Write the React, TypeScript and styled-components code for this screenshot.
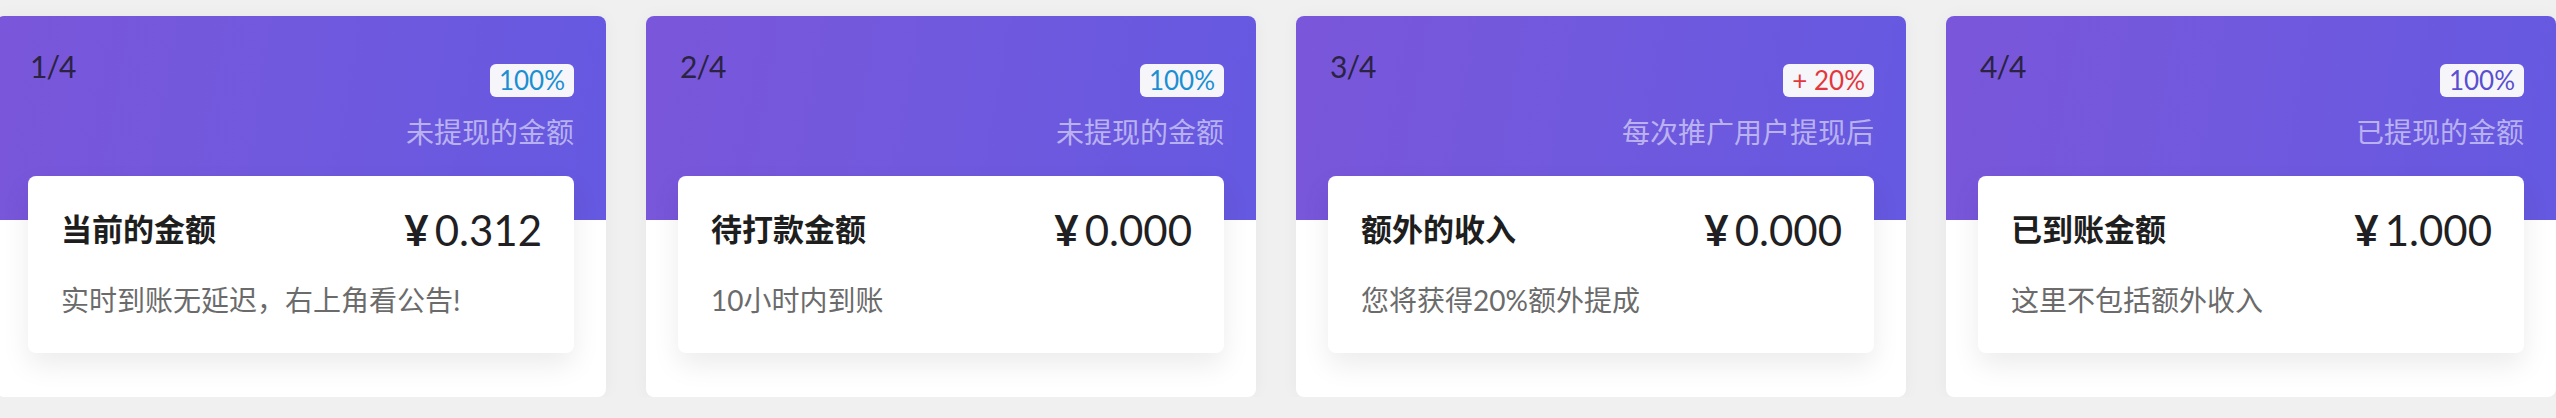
import styled, { createGlobalStyle } from 'styled-components'

const GlobalStyle = createGlobalStyle`
	html,
	body {
		margin: 0;
		padding: 0;
		background: #f0f0f0;
		overflow: hidden;
	}
	body {
		font-family: Lato, 'Noto Sans CJK SC', sans-serif;
	}
`

type Tone = 'blue' | 'red' | 'purple'

const toneColors: Record<Tone, string> = {
	blue: '#1c8fd2',
	red: '#e2383d',
	purple: '#5a4fd0',
}

const Track = styled.div`
	display: flex;
	gap: 40px;
	padding-top: 16px;
	margin-left: -4px;
	width: max-content;
`

const Card = styled.div`
	flex: 0 0 610px;
	height: 381px;
	background: #fff;
	border-radius: 8px;
	overflow: hidden;
	box-shadow: 0 0 18px rgba(0, 0, 0, 0.04);
`

const Header = styled.div`
	height: 204px;
	box-sizing: border-box;
	padding: 30px 32px 0 34px;
	display: flex;
	justify-content: space-between;
	align-items: flex-start;
	background: linear-gradient(100deg, #7a56da 0%, #7159dd 45%, #6559e1 100%);
`

const Index = styled.div`
	font-size: 30px;
	line-height: 1.35;
	color: #2a2342;
	letter-spacing: -1px;
`

const HeaderRight = styled.div`
	display: flex;
	flex-direction: column;
	align-items: flex-end;
	padding-top: 18px;
`

const Badge = styled.span<{ $tone: Tone }>`
	display: inline-block;
	height: 33px;
	box-sizing: border-box;
	padding: 0 9px;
	line-height: 33px;
	border-radius: 6px;
	background: #f6f6fa;
	color: ${(p) => toneColors[p.$tone]};
	font-size: 26px;
`

const HeaderLabel = styled.div`
	margin-top: 18px;
	font-size: 28px;
	line-height: 34px;
	color: rgba(255, 255, 255, 0.55);
`

const Inner = styled.div`
	margin: -44px 32px 0;
	height: 177px;
	box-sizing: border-box;
	padding: 29px 32px 0 33px;
	background: #fff;
	border-radius: 8px;
	box-shadow: 0 12px 28px rgba(0, 0, 0, 0.08);
	position: relative;
`

const TitleRow = styled.div`
	display: flex;
	justify-content: space-between;
	align-items: center;
	height: 50px;
`

const Title = styled.div`
	font-size: 31px;
	font-weight: 700;
	color: #1e1e1e;
	margin-top: -6px;
`

const Amount = styled.div`
	font-size: 42px;
	color: #1f1f24;
	display: flex;
	align-items: baseline;
`

const Yen = styled.span`
	font-weight: 700;
	margin-right: 6px;
`

const Note = styled.div`
	margin-top: 24px;
	font-size: 28px;
	line-height: 42px;
	color: #6b6b6b;
`

type Item = {
	badge: string
	tone: Tone
	label: string
	title: string
	amount: string
	note: string
}

const items: Item[] = [
	{
		badge: '100%',
		tone: 'blue',
		label: '未提现的金额',
		title: '当前的金额',
		amount: '0.312',
		note: '实时到账无延迟，右上角看公告!',
	},
	{
		badge: '100%',
		tone: 'blue',
		label: '未提现的金额',
		title: '待打款金额',
		amount: '0.000',
		note: '10小时内到账',
	},
	{
		badge: '+ 20%',
		tone: 'red',
		label: '每次推广用户提现后',
		title: '额外的收入',
		amount: '0.000',
		note: '您将获得20%额外提成',
	},
	{
		badge: '100%',
		tone: 'purple',
		label: '已提现的金额',
		title: '已到账金额',
		amount: '1.000',
		note: '这里不包括额外收入',
	},
]

export default function App() {
	return (
		<>
			<GlobalStyle />
			<Track>
				{items.map((item, i) => (
					<Card key={i}>
						<Header>
							<Index>
								{i + 1}/{items.length}
							</Index>
							<HeaderRight>
								<Badge $tone={item.tone}>{item.badge}</Badge>
								<HeaderLabel>{item.label}</HeaderLabel>
							</HeaderRight>
						</Header>
						<Inner>
							<TitleRow>
								<Title>{item.title}</Title>
								<Amount>
									<Yen>¥</Yen>
									{item.amount}
								</Amount>
							</TitleRow>
							<Note>{item.note}</Note>
						</Inner>
					</Card>
				))}
			</Track>
		</>
	)
}
